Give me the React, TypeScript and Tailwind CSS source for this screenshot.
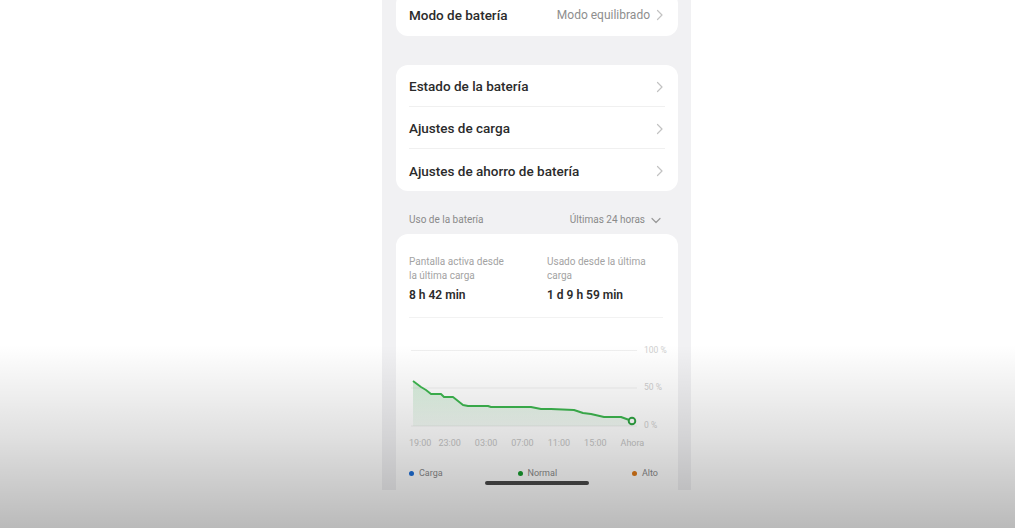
import React from "react";

const font = { fontFamily: "Roboto, 'Noto Sans', Arial, sans-serif" };

const ChevronRight = () => (
  <svg width="8" height="12" viewBox="0 0 8 12" className="shrink-0">
    <path d="M1.5 1.5 L6 6 L1.5 10.5" fill="none" stroke="#c2c2c2" strokeWidth="1.2" strokeLinecap="round" strokeLinejoin="round" />
  </svg>
);

const ChevronDown = () => (
  <svg width="10" height="7" viewBox="0 0 10 7" className="shrink-0">
    <path d="M1 1.5 L5 5.5 L9 1.5" fill="none" stroke="#9a9a9a" strokeWidth="1.2" strokeLinecap="round" strokeLinejoin="round" />
  </svg>
);

// chart line points, local coords (origin at page x=409, y=342)
const pts: [number, number][] = [
  [4, 39], [12, 45], [17, 48], [22, 52], [32, 52], [35, 55], [44, 55], [54, 63], [59, 64],
  [79, 64], [82, 65], [122, 65], [132, 67], [142, 67], [165, 68], [174, 71], [182, 72],
  [195, 75], [212, 75], [223, 79],
];

function BatteryChart() {
  const line = pts.map((p, i) => `${i === 0 ? "M" : "L"}${p[0]} ${p[1]}`).join(" ");
  const area = `${line} L223 84 L4 84 Z`;
  return (
    <div className="relative h-[90px] mt-[24px]">
      <svg width="254" height="90" viewBox="0 0 254 90" className="absolute inset-0">
        <defs>
          <linearGradient id="fillG" x1="0" y1="0" x2="0" y2="1">
            <stop offset="0%" stopColor="#43b35a" stopOpacity="0.22" />
            <stop offset="100%" stopColor="#43b35a" stopOpacity="0.06" />
          </linearGradient>
        </defs>
        <line x1="2" y1="8.5" x2="228" y2="8.5" stroke="#efefef" strokeWidth="1" />
        <line x1="2" y1="46" x2="228" y2="46" stroke="#efefef" strokeWidth="1" />
        <line x1="2" y1="84" x2="228" y2="84" stroke="#efefef" strokeWidth="1" />
        <path d={area} fill="url(#fillG)" />
        <path d={line} fill="none" stroke="#3db64f" strokeWidth="1.9" strokeLinejoin="round" />
        <circle cx="223" cy="79" r="3.3" fill="#fff" stroke="#2fa443" strokeWidth="1.9" />
      </svg>
      <span className="absolute left-[235px] top-[3px] whitespace-nowrap text-[8.5px] leading-[11px] text-[#cfcfcf]">100 %</span>
      <span className="absolute left-[235px] top-[40px] whitespace-nowrap text-[8.5px] leading-[11px] text-[#cfcfcf]">50 %</span>
      <span className="absolute left-[235px] top-[78px] whitespace-nowrap text-[8.5px] leading-[11px] text-[#cfcfcf]">0 %</span>
    </div>
  );
}

export default function App() {
  const times = ["19:00", "23:00", "03:00", "07:00", "11:00", "15:00", "Ahora"];
  return (
    <div className="relative w-full h-[528px] bg-white overflow-hidden" style={font}>
      <div className="pl-[382px]">
        <div className="relative w-[309px] h-[490px] bg-[#f1f1f3] overflow-hidden">
          {/* Modo de batería */}
          <div className="mx-[14px] mr-[13px] -mt-[8px] bg-white rounded-[12px] h-[44px] flex items-center justify-between pl-[13px] pr-[14px] pt-[2px]">
            <span className="text-[13.5px] font-medium text-[#2b2b2b]">Modo de batería</span>
            <div className="flex items-center gap-[6px]">
              <span className="text-[12px] text-[#8e8e8e]">Modo equilibrado</span>
              <ChevronRight />
            </div>
          </div>

          {/* ajustes */}
          <div className="mx-[14px] mr-[13px] mt-[29px] bg-white rounded-[12px]">
            {["Estado de la batería", "Ajustes de carga", "Ajustes de ahorro de batería"].map((t, i) => (
              <div key={t} className="px-[13px]">
                <div className={`h-[42px] flex items-center justify-between pr-[1px] pt-[2px] ${i < 2 ? "border-b border-[#f0f0f0]" : ""}`}>
                  <span className="text-[13.5px] font-medium text-[#2b2b2b]">{t}</span>
                  <ChevronRight />
                </div>
              </div>
            ))}
          </div>

          {/* Uso de la batería header */}
          <div className="pl-[27px] pr-[30px] pt-[22px] flex items-center justify-between">
            <span className="text-[10px] leading-[14px] text-[#8a8a8a]">Uso de la batería</span>
            <div className="flex items-center gap-[6px]">
              <span className="text-[10px] leading-[14px] text-[#8a8a8a]">Últimas 24 horas</span>
              <ChevronDown />
            </div>
          </div>

          {/* usage card */}
          <div className="mx-[14px] mr-[13px] mt-[7px] bg-white rounded-t-[12px] h-[300px] px-[13px] pt-[21px]">
            <div className="flex pb-[14px] border-b border-[#f2f2f2] mr-[2px]">
              <div className="w-[138px]">
                <p className="text-[10px] leading-[14px] text-[#a3a3a3]">Pantalla activa desde<br />la última carga</p>
                <p className="mt-[4px] text-[12px] leading-[16px] font-semibold text-[#2b2b2b]">8 h 42 min</p>
              </div>
              <div className="flex-1">
                <p className="text-[10px] leading-[14px] text-[#a3a3a3]">Usado desde la última<br />carga</p>
                <p className="mt-[4px] text-[12px] leading-[16px] font-semibold text-[#2b2b2b]">1 d 9 h 59 min</p>
              </div>
            </div>

            <BatteryChart />

            <div className="mt-[5px] flex gap-[14px] text-[9px] leading-[12px] text-[#c6c6c6]">
              {times.map((t, i) => (
                <span key={t} className={i === 0 ? "-mr-[7px]" : ""}>{t}</span>
              ))}
            </div>

            <div className="mt-[18px] pr-[7px] flex justify-between items-center text-[9px] leading-[12px] text-[#8a8a8a]">
              <div className="flex items-center gap-[5px]">
                <span className="w-[5px] h-[5px] rounded-full bg-[#1d6fd8]" />
                <span>Carga</span>
              </div>
              <div className="flex items-center gap-[5px]">
                <span className="w-[5px] h-[5px] rounded-full bg-[#189c2f]" />
                <span>Normal</span>
              </div>
              <div className="flex items-center gap-[5px]">
                <span className="w-[5px] h-[5px] rounded-full bg-[#df7a18]" />
                <span>Alto</span>
              </div>
            </div>
          </div>

          {/* home indicator */}
          <div className="absolute left-[103px] top-[481px] w-[104px] h-[4px] rounded-full bg-[#4a4a4a]" />
        </div>
      </div>

      {/* bottom shade */}
      <div className="absolute left-0 right-0 top-[345px] bottom-0 pointer-events-none bg-gradient-to-b from-[rgba(0,0,0,0)] via-[rgba(0,0,0,0.12)] to-[rgba(0,0,0,0.27)]" />
    </div>
  );
}
